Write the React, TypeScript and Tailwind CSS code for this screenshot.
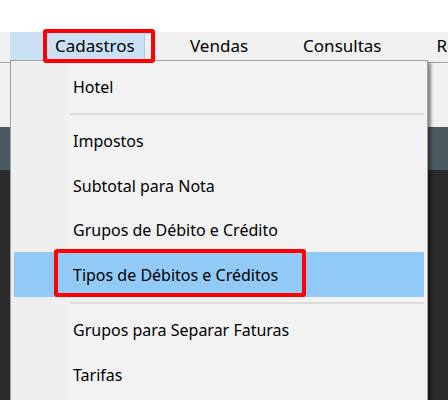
const font = { fontFamily: '"Noto Sans", "Open Sans", sans-serif' }

function Item({ label, h, active }: { label: string; h: string; active?: boolean }) {
  return (
    <div
      className={`${h} flex items-center pl-[59px] text-[16px] text-black ${active ? 'bg-[#91c9f7]' : ''}`}
    >
      {label}
    </div>
  )
}

function Sep({ h }: { h: string }) {
  return (
    <div className={`${h} flex items-center pl-[56px]`}>
      <div className="h-[2px] w-full bg-[#dcdcdc]" />
    </div>
  )
}

export default function App() {
  return (
    <div className="relative w-[448px] h-[400px] overflow-hidden bg-white" style={font}>
      {/* top white strip */}
      <div className="h-[32px] bg-white" />

      {/* menu bar */}
      <div className="h-[31px] bg-[#f0f0f0] border-b border-[#a0a0a0] flex items-start text-[17px] text-black whitespace-nowrap">
        <div className="shrink-0 ml-[10px] w-[135px] h-[28px] flex items-center pl-[45px] bg-[#c9e0f5] border-r border-[#a8cdef]">
          Cadastros
        </div>
        <div className="shrink-0 ml-[45px] h-[28px] flex items-center">Vendas</div>
        <div className="shrink-0 ml-[55px] h-[28px] flex items-center">Consultas</div>
        <div className="shrink-0 ml-[55px] h-[28px] flex items-center">Relatórios</div>
      </div>

      {/* window content behind the menu */}
      <div className="h-[64px] bg-[#f0f0f0]" />
      <div className="h-[43px] bg-[#4a5a5f]" />
      <div className="h-[230px] bg-[#2b2b2b]" />

      {/* dropdown */}
      <div className="absolute left-[10px] top-[60px] w-[418px] h-[350px] border border-[#a0a0a0] bg-[linear-gradient(to_right,#efefef_57px,#f2f2f2_57px)] p-[3px] shadow-[3px_3px_3px_rgba(0,0,0,0.45)]">
        <Item label="Hotel" h="h-[45px]" />
        <Sep h="h-[10px]" />
        <Item label="Impostos" h="h-[44px]" />
        <Item label="Subtotal para Nota" h="h-[45px]" />
        <Item label="Grupos de Débito e Crédito" h="h-[44px]" />
        <Item label="Tipos de Débitos e Créditos" h="h-[45px]" active />
        <Sep h="h-[11px]" />
        <Item label="Grupos para Separar Faturas" h="h-[44px]" />
        <Item label="Tarifas" h="h-[45px]" />
      </div>

      {/* red annotation boxes */}
      <div className="absolute left-[43px] top-[29px] w-[112px] h-[34px] border-4 border-[#ff0000] rounded-[3px]" />
      <div className="absolute left-[54px] top-[249px] w-[252px] h-[48px] border-4 border-[#ff0000] rounded-[3px]" />
    </div>
  )
}
